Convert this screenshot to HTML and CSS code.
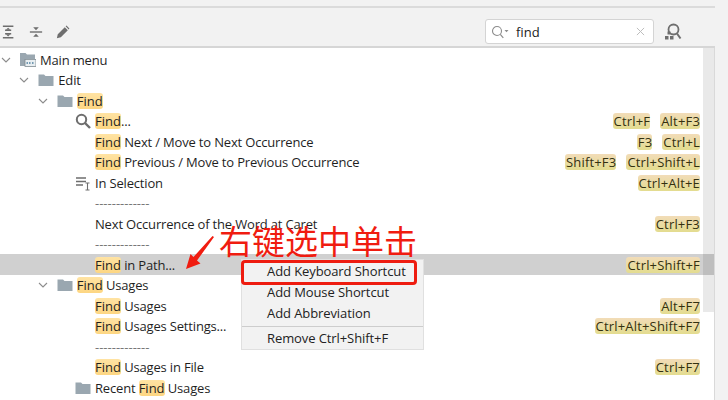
FILE: index.html
```html
<!DOCTYPE html>
<html lang="en">
<head>
<meta charset="utf-8">
<title>Keymap</title>
<link rel="stylesheet" href="styles.css">
</head>
<body>
<div class="panel">
  <div class="topband"></div>
  <div class="toolbar">
    <div class="tools">
      <svg class="tool" viewBox="0 0 16 16"><path d="M1 1.500h12M1 14.500h12M3.500 6h7M3.500 10h7" fill="none" stroke="#6e6e6e" stroke-width="1.600"/><path d="M7 3l2.600 2.400H4.400zM7 13L4.400 10.600h5.200z" fill="#6e6e6e"/></svg>
      <svg class="tool" viewBox="0 0 16 16"><path d="M1 8h14" fill="none" stroke="#6e6e6e" stroke-width="1.600"/><path d="M8 6L4.800 2.500h6.400zM8 10l3.200 3.500H4.800z" fill="#6e6e6e"/></svg>
      <svg class="tool" viewBox="0 0 16 16"><path d="M1 15l1-4.500 8-8 3.500 3.500-8 8zM11 1.500l1-.8 3.300 3.300-.8 1z" fill="#6e6e6e"/></svg>
    </div>
    <div class="search">
      <svg class="search-icon" viewBox="0 0 18 14"><circle cx="6" cy="6" r="4.500" fill="none" stroke="#8c8c8c" stroke-width="1.100"/><path d="M9.300 9.300l3 3.500" stroke="#8c8c8c" stroke-width="1.200"/><path d="M13.500 5h4l-2 2.200z" fill="#8c8c8c"/></svg>
      <span class="search-text">find</span>
      <svg class="search-clear" viewBox="0 0 10 10"><path d="M1 1l8 8M9 1l-8 8" stroke="#bdbdbd" stroke-width="1.100"/></svg>
    </div>
    <svg class="find-action" viewBox="0 0 18 18"><circle cx="9.500" cy="6.500" r="5" fill="none" stroke="#6e6e6e" stroke-width="1.800"/><path d="M13 10.500l3.500 5" stroke="#6e6e6e" stroke-width="2"/><rect x="1" y="13" width="3.500" height="3.500" fill="#6e6e6e"/><rect x="6" y="13" width="3.500" height="3.500" fill="#6e6e6e"/><rect x="3.500" y="8.500" width="3" height="3" fill="#6e6e6e"/></svg>
  </div>

  <div class="tree">
    <div class="row l0">
      <svg class="chev" viewBox="0 0 10 6"><path d="M1 1l4 4 4-4" fill="none" stroke="#8c8c8c" stroke-width="1.100"/></svg>
      <svg class="icon" viewBox="0 0 16 16"><path d="M0 1h5.500l1.500 1.500H15V5H0z" fill="#9aa7b0"/><path d="M0 5h15v2H5v7H0z" fill="#9aa7b0"/><rect x="5" y="7.500" width="11" height="7" fill="#e8eef1" stroke="#7f8b91" stroke-width=".8"/><path d="M6.500 11h1.500M9 11h1.500M12 11h1.500" stroke="#4e7f9e" stroke-width="1.600"/></svg>
      <span class="label">Main menu</span>
    </div>
    <div class="row l1">
      <svg class="chev" viewBox="0 0 10 6"><path d="M1 1l4 4 4-4" fill="none" stroke="#8c8c8c" stroke-width="1.100"/></svg>
      <svg class="icon" viewBox="0 0 16 16"><path d="M.5 2.500h5.500l1.500 1.500h8v10H.5z" fill="#9aa7b0"/></svg>
      <span class="label">Edit</span>
    </div>
    <div class="row l2">
      <svg class="chev" viewBox="0 0 10 6"><path d="M1 1l4 4 4-4" fill="none" stroke="#8c8c8c" stroke-width="1.100"/></svg>
      <svg class="icon" viewBox="0 0 16 16"><path d="M.5 2.500h5.500l1.500 1.500h8v10H.5z" fill="#9aa7b0"/></svg>
      <span class="label"><mark class="hit">Find</mark></span>
    </div>
    <div class="row l3">
      <span class="chev"></span>
      <svg class="icon" viewBox="0 0 16 16"><circle cx="6.500" cy="6.500" r="4.700" fill="none" stroke="#6e6e6e" stroke-width="2"/><path d="M10 10l5 5" stroke="#6e6e6e" stroke-width="2.400"/></svg>
      <span class="label"><mark class="hit">Find</mark>...</span>
      <span class="keys"><mark class="key">Ctrl+F</mark><mark class="key">Alt+F3</mark></span>
    </div>
    <div class="row l3">
      <span class="chev"></span><span class="icon"></span>
      <span class="label"><mark class="hit">Find</mark> Next / Move to Next Occurrence</span>
      <span class="keys"><mark class="key">F3</mark><mark class="key">Ctrl+L</mark></span>
    </div>
    <div class="row l3">
      <span class="chev"></span><span class="icon"></span>
      <span class="label"><mark class="hit">Find</mark> Previous / Move to Previous Occurrence</span>
      <span class="keys"><mark class="key">Shift+F3</mark><mark class="key">Ctrl+Shift+L</mark></span>
    </div>
    <div class="row l3">
      <span class="chev"></span>
      <svg class="icon" viewBox="0 0 16 16"><path d="M1 3h10M1 6.500h10M1 10h7" stroke="#6e6e6e" stroke-width="1.700" fill="none"/><path d="M10.500 8h4M12.500 8v7M10.500 15h4" stroke="#6e6e6e" stroke-width="1.100" fill="none"/></svg>
      <span class="label">In Selection</span>
      <span class="keys"><mark class="key">Ctrl+Alt+E</mark></span>
    </div>
    <div class="row l3">
      <span class="chev"></span><span class="icon"></span>
      <span class="label sep">-------------</span>
    </div>
    <div class="row l3">
      <span class="chev"></span><span class="icon"></span>
      <span class="label">Next Occurrence of the Word at Caret</span>
      <span class="keys"><mark class="key">Ctrl+F3</mark></span>
    </div>
    <div class="row l3">
      <span class="chev"></span><span class="icon"></span>
      <span class="label sep">-------------</span>
    </div>
    <div class="row l3 selected">
      <span class="chev"></span><span class="icon"></span>
      <span class="label"><mark class="hit">Find</mark> in Path...</span>
      <span class="keys"><mark class="key">Ctrl+Shift+F</mark></span>
    </div>
    <div class="row l2">
      <svg class="chev" viewBox="0 0 10 6"><path d="M1 1l4 4 4-4" fill="none" stroke="#8c8c8c" stroke-width="1.100"/></svg>
      <svg class="icon" viewBox="0 0 16 16"><path d="M.5 2.500h5.500l1.500 1.500h8v10H.5z" fill="#9aa7b0"/></svg>
      <span class="label"><mark class="hit">Find</mark> Usages</span>
    </div>
    <div class="row l3">
      <span class="chev"></span><span class="icon"></span>
      <span class="label"><mark class="hit">Find</mark> Usages</span>
      <span class="keys"><mark class="key">Alt+F7</mark></span>
    </div>
    <div class="row l3">
      <span class="chev"></span><span class="icon"></span>
      <span class="label"><mark class="hit">Find</mark> Usages Settings...</span>
      <span class="keys"><mark class="key">Ctrl+Alt+Shift+F7</mark></span>
    </div>
    <div class="row l3">
      <span class="chev"></span><span class="icon"></span>
      <span class="label sep">-------------</span>
    </div>
    <div class="row l3">
      <span class="chev"></span><span class="icon"></span>
      <span class="label"><mark class="hit">Find</mark> Usages in File</span>
      <span class="keys"><mark class="key">Ctrl+F7</mark></span>
    </div>
    <div class="row l3">
      <span class="chev"></span>
      <svg class="icon" viewBox="0 0 16 16"><path d="M.5 2.500h5.500l1.500 1.500h8v10H.5z" fill="#9aa7b0"/></svg>
      <span class="label">Recent <mark class="hit">Find</mark> Usages</span>
    </div>
    <div class="scrollbar"></div>
  </div>

  <div class="menu">
    <div class="menu-item">Add Keyboard Shortcut</div>
    <div class="menu-item">Add Mouse Shortcut</div>
    <div class="menu-item">Add Abbreviation</div>
    <div class="menu-divider"></div>
    <div class="menu-item">Remove Ctrl+Shift+F</div>
  </div>
  <div class="callout-box"></div>
  <div class="callout-text" lang="zh-CN">右键选中单击</div>
  <svg class="callout-arrow" viewBox="0 0 28 33"><path d="M28 1L11 24.500l3.500 3L0 33 4.500 18l3 3L26.500 0z" fill="#f01c10"/></svg>
</div>
</body>
</html>
```
FILE: styles.css
```css
* { box-sizing: border-box; }
html, body { margin: 0; padding: 0; }
body { width: 728px; height: 400px; overflow: hidden; background: #f2f2f2; font-family: "Open Sans", "Noto Sans", "Liberation Sans", sans-serif; color: #1f1f1f; }

.panel { position: relative; width: 728px; height: 400px; }

.topband { height: 8px; width: 715px; border-bottom: 2px solid #dbdbdb; }

.toolbar { height: 40px; width: 715px; display: flex; align-items: center; padding: 9px 33px 0 0; border-bottom: 2px solid #d6d6d6; }
.tools { display: flex; gap: 13px; margin-left: 2px; margin-right: auto; }
.tool { width: 14px; height: 16px; display: block; }

.search { width: 169px; height: 25px; display: flex; align-items: center; background: #fff; border: 1px solid #d4d4d4; border-radius: 3px; padding: 0 8px 0 5px; margin-right: 10px; }
.search-icon { width: 18px; height: 14px; flex: none; }
.search-text { font-size: 13px; margin-left: 7px; flex: 1; color: #222; }
.search-clear { width: 9px; height: 9px; }
.find-action { width: 18px; height: 18px; flex: none; }

.tree { position: relative; width: 715px; height: 352px; background: #fff; border-right: 1px solid #d9d9d9; padding-top: 1.250px; overflow: hidden; }

.row { height: 20.500px; display: flex; align-items: center; padding-right: 14px; font-size: 13px; letter-spacing: -.17px; white-space: nowrap; }
.l0 { padding-left: 0; }
.l1 { padding-left: 18.300px; }
.l2 { padding-left: 36.800px; }
.l3 { padding-left: 55px; }
.selected { background: #d0d0d0; }

.chev { width: 20px; flex: none; height: 6px; padding-right: 9px; padding-left: 1px; }
.icon { width: 16px; height: 16px; flex: none; margin-right: 4px; }
.label { flex: none; }
.sep { color: #777; letter-spacing: 0; }
.keys { margin-left: auto; display: flex; gap: 10px; letter-spacing: .18px; }

.hit, .key { display: inline-block; height: 16px; line-height: 16px; border-radius: 3px; }
.hit { color: inherit; letter-spacing: 0; background: linear-gradient(#ffe3a3, #fdd682); }
.key { color: #33300f; padding-left: 1px; background: linear-gradient(#f2dcb8, #e3dc8f); }

.scrollbar { position: absolute; right: 0; top: 0; width: 11px; height: 264px; background: rgba(0, 0, 0, .085); }

.menu { position: absolute; left: 241px; top: 259px; width: 183px; height: 91px; background: #f2f2f2; border: 1px solid #e0e0e0; font-size: 13px; letter-spacing: -.09px; padding-top: 1px; }
.menu-item { height: 21px; line-height: 21px; padding-left: 25px; color: #222; white-space: nowrap; }
.menu-divider { height: 1px; margin: 1.500px 0 1.500px; background: #cdcdcd; }

.callout-box { position: absolute; left: 241px; top: 260px; width: 176px; height: 25px; border: 3px solid #ee1c10; border-radius: 4px; }
.callout-text { position: absolute; left: 219px; top: 218px; font-family: "Noto Sans CJK SC", sans-serif; font-size: 33px; line-height: 44px; color: #f01c10; white-space: nowrap; }
.callout-arrow { position: absolute; left: 186px; top: 236px; width: 28px; height: 33px; }
```
